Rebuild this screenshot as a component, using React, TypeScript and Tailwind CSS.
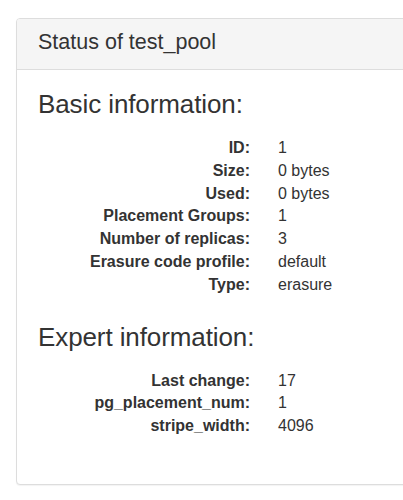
import React from "react";

const basic: [string, string][] = [
  ["ID:", "1"],
  ["Size:", "0 bytes"],
  ["Used:", "0 bytes"],
  ["Placement Groups:", "1"],
  ["Number of replicas:", "3"],
  ["Erasure code profile:", "default"],
  ["Type:", "erasure"],
];

const expert: [string, string][] = [
  ["Last change:", "17"],
  ["pg_placement_num:", "1"],
  ["stripe_width:", "4096"],
];

function DL({ rows }: { rows: [string, string][] }) {
  return (
    <dl className="grid grid-cols-[212px_1fr] gap-x-[28px] text-[16px] leading-[22.8px] text-[#333]">
      {rows.map(([k, v]) => (
        <React.Fragment key={k}>
          <dt className="text-right font-bold">{k}</dt>
          <dd>{v}</dd>
        </React.Fragment>
      ))}
    </dl>
  );
}

export default function App() {
  return (
    <div
      className="w-[403px] h-[500px] overflow-hidden bg-white pt-[18px]"
      style={{ fontFamily: '"Liberation Sans", Arial, sans-serif' }}
    >
      <div className="ml-[16px] w-[420px] border border-[#ddd] rounded-[4px] shadow-[0_1px_1px_rgba(0,0,0,0.05)] bg-white">
        <div className="bg-[#f5f5f5] border-b border-[#ddd] rounded-t-[3px] px-[21px] pt-[12px] pb-[15px] text-[21.5px] leading-[23px] text-[#333]">
          Status of test_pool
        </div>
        <div className="px-[21px] pt-[21px] pb-[46px]">
          <h3 className="text-[26px] leading-[27px] tracking-[-0.1px] font-normal text-[#333] mb-[19px]">
            Basic information:
          </h3>
          <DL rows={basic} />
          <h3 className="text-[26px] leading-[27px] tracking-[-0.1px] font-normal text-[#333] mt-[27px] mb-[19px]">
            Expert information:
          </h3>
          <DL rows={expert} />
        </div>
      </div>
    </div>
  );
}
